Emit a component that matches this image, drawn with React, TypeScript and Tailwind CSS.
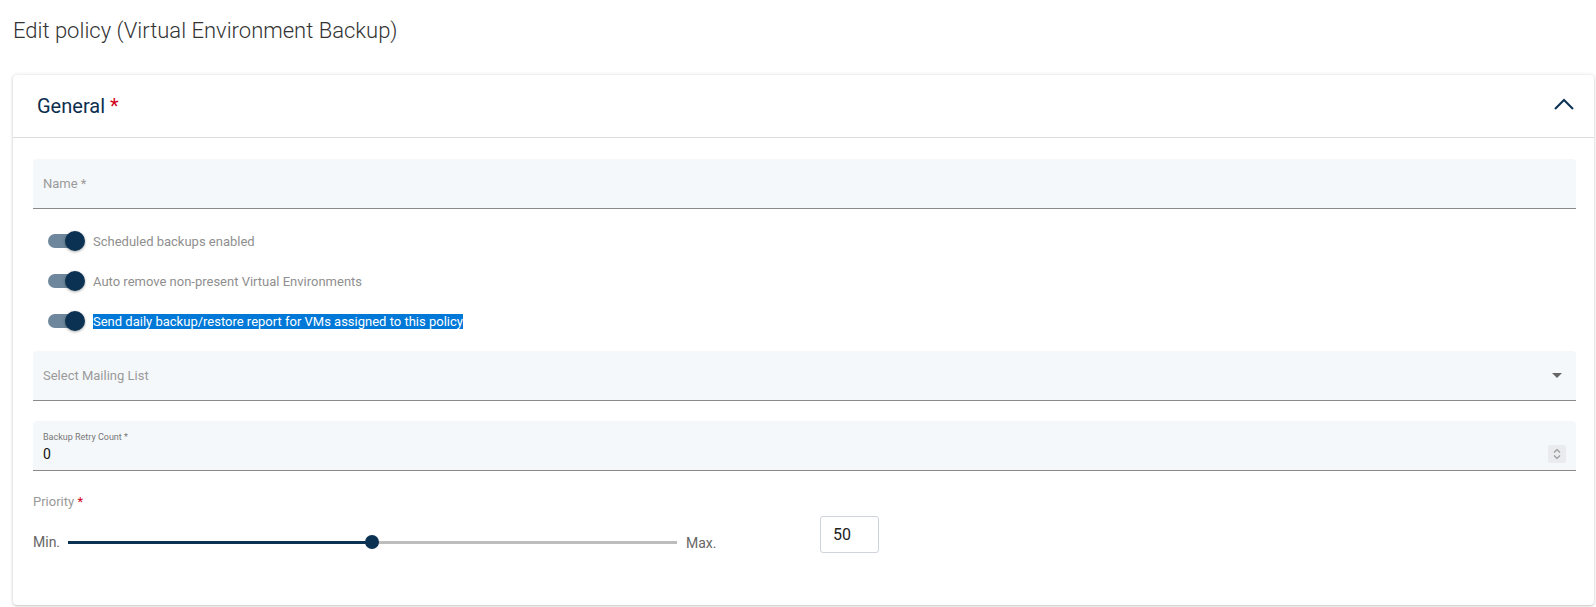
function Toggle({ label, selected }: { label: string; selected?: boolean }) {
  return (
    <div className="flex h-[40px] items-center pl-[15px]">
      <div className="relative h-[14px] w-[32px] rounded-full bg-[#6e879c]">
        <span className="absolute left-[17px] top-[-3px] h-[20px] w-[20px] rounded-full bg-[#0b3153] shadow-[0_1px_3px_rgba(0,0,0,0.35)]" />
      </div>
      <span
        className={
          selected
            ? 'ml-[13px] bg-[#0078d7] text-[13px] leading-[15px] text-white'
            : 'ml-[13px] text-[13px] leading-[15px] text-[#8f8f8f]'
        }
      >
        {label}
      </span>
    </div>
  );
}

export default function App() {
  return (
    <div className="min-h-[607px] bg-white pl-[13px] pt-[17px] font-['Roboto',sans-serif]">
      <h1 className="text-[22px] font-light leading-[28px] text-[#333]">
        Edit policy (Virtual Environment Backup)
      </h1>

      <div className="mt-[30px] h-[530px] w-[1581px] rounded-[4px] bg-white shadow-[0_0_4px_rgba(0,0,0,0.12),0_1px_2px_rgba(0,0,0,0.18)]">
        {/* header */}
        <div className="flex h-[63px] items-center justify-between border-b border-[#dcdcdc] pl-[24px] pr-[20px]">
          <div className="text-[20px] leading-[24px] text-[#0b2e4f]">
            General <span className="text-[#d0021b]">*</span>
          </div>
          <svg width="20" height="12" viewBox="0 0 20 12" fill="none" stroke="#0b3153" strokeWidth="2" className="mb-[4px]">
            <path d="M1 11 10 2 19 11" />
          </svg>
        </div>

        {/* body */}
        <div className="pl-[20px] pr-[18px] pt-[21px]">
          <div className="flex h-[50px] items-center rounded-t-[4px] border-b border-[#8a8a8a] bg-[#f5f8fa] pl-[10px] text-[13px] text-[#9a9a9a]">
            Name *
          </div>

          <div className="pt-[12px]">
            <Toggle label="Scheduled backups enabled" />
            <Toggle label="Auto remove non-present Virtual Environments" />
            <Toggle label="Send daily backup/restore report for VMs assigned to this policy" selected />
          </div>

          <div className="mt-[10px] flex h-[50px] items-center justify-between rounded-t-[4px] border-b border-[#8a8a8a] bg-[#f5f8fa] pl-[10px] pr-[14px] text-[13px] text-[#9a9a9a]">
            <span>Select Mailing List</span>
            <span className="h-0 w-0 border-x-[5px] border-t-[5px] border-x-transparent border-t-[#666]" />
          </div>

          <div className="mt-[20px] flex h-[50px] items-center justify-between rounded-t-[4px] border-b border-[#8a8a8a] bg-[#f5f8fa] pl-[10px] pr-[10px]">
            <div className="flex flex-col pt-[2px]">
              <span className="text-[9px] leading-[12px] text-[#777]">Backup Retry Count *</span>
              <span className="mt-[3px] text-[14px] leading-[16px] text-[#111]">0</span>
            </div>
            <div className="mt-[16px] flex h-[18px] w-[18px] flex-col items-center justify-center rounded-[2px] bg-[#e9ebee] text-[#999]">
              <svg width="8" height="12" viewBox="0 0 8 12" fill="none" stroke="currentColor" strokeWidth="1.2">
                <path d="M1 4.5 4 1.5 7 4.5" />
                <path d="M1 7.5 4 10.5 7 7.5" />
              </svg>
            </div>
          </div>

          <div className="mt-[23px] text-[13px] leading-[16px] text-[#9a9a9a]">
            Priority <span className="text-[#d0021b]">*</span>
          </div>

          <div className="mt-[6px] flex items-start">
            <div className="mt-[17px] flex h-[18px] items-center">
              <span className="w-[35px] text-[14px] text-[#666]">Min.</span>
              <div className="relative h-[3px] w-[609px] bg-[#bdbdbd]">
                <div className="h-[3px] w-[304px] bg-[#0b3153]" />
                <span className="absolute left-[297px] top-[-5.5px] h-[14px] w-[14px] rounded-full bg-[#0b3153]" />
              </div>
              <span className="ml-[9px] w-[134px] pt-[3px] text-[14px] text-[#666]">Max.</span>
            </div>
            <div className="flex h-[37px] w-[59px] items-center rounded-[3px] border border-[#cfd4dc] pl-[12px] text-[16px] text-[#222]">
              50
            </div>
          </div>
        </div>
      </div>
    </div>
  );
}
